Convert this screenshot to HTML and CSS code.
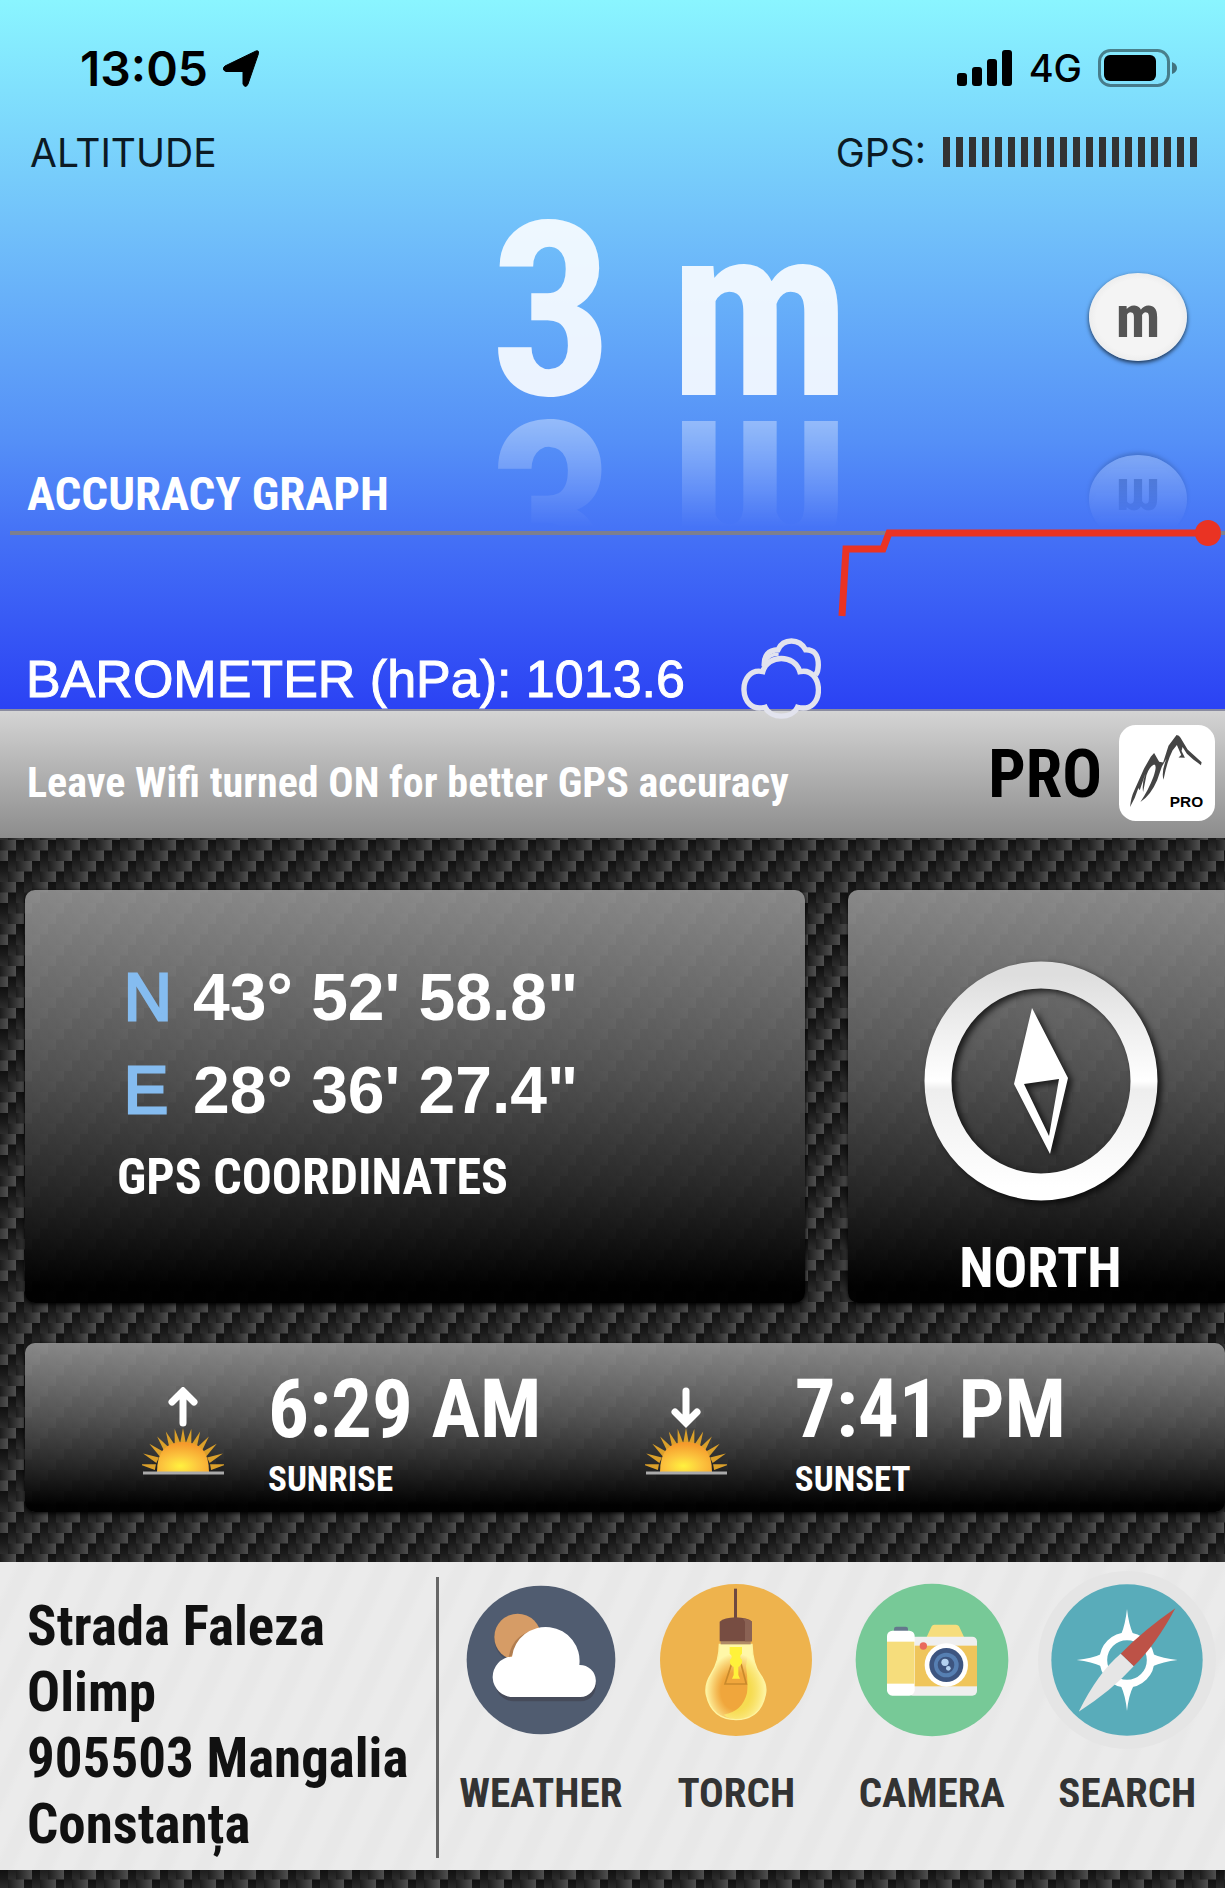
FILE: index.html
```html
<!DOCTYPE html>
<html lang="en">
<head>
<meta charset="utf-8">
<meta name="viewport" content="width=device-width, initial-scale=1">
<title>Altimeter</title>
<link rel="stylesheet" href="styles.css">
</head>
<body>
<header class="sky">
  <div class="status">
    <span class="clock">13:05</span>
    <svg class="arrow" viewBox="0 0 36 37"><path d="M33 1Q36 0 35.500 3.500L25 34Q22.500 39 20 34V21.500H3Q-2 19.500 2 16Z" stroke="#000" stroke-linejoin="round"/></svg>
    <svg class="signal" viewBox="0 0 56 36"><rect y="23" width="10" height="13" rx="3"/><rect x="15" y="17" width="10" height="19" rx="3"/><rect x="30" y="9" width="10" height="27" rx="3"/><rect x="45" width="10" height="36" rx="3"/></svg>
    <span class="network">4G</span>
    <svg class="battery" viewBox="0 0 80 38"><rect x="1.500" y="1.500" width="69" height="35" rx="11" fill="none" stroke="#000" stroke-opacity=".45" stroke-width="3"/><rect x="6" y="6" width="52" height="26" rx="6"/><path d="M74 13q5 2 5 6t-5 6z" fill-opacity=".5"/></svg>
  </div>
  <div class="meta">
    <span>ALTITUDE</span>
    <span class="gps">GPS:</span>
    <span class="bars" role="img" aria-label="GPS signal: full"></span>
  </div>
  <div class="readout">
    <output class="altitude">3 m</output>
    <button class="unit" type="button">m</button>
  </div>
  <h2 class="graph-title">ACCURACY GRAPH</h2>
  <svg class="graph" viewBox="0 0 1225 120" role="img" aria-label="Accuracy graph">
    <path d="M10 15H1225" stroke="#7c7f90" stroke-width="4"/>
    <path d="M842 98L846 31H883L889 15H1208" fill="none" stroke="#ea3323" stroke-width="7"/>
    <circle cx="1208" cy="15" r="13" fill="#ea3323"/>
  </svg>
  <div class="baro">
    <span>BAROMETER (hPa): 1013.6</span>
    <svg class="cloud" viewBox="124 416 238 240" fill="none" stroke="#e2e3ee" stroke-width="16">
      <path d="M193 500Q191 452 234 451Q246 425 274 425Q302 425 316 451Q354 450 354 496Q354 515 346 526"/>
      <path d="M197 489Q205 464 236 464" stroke-width="10"/>
      <path d="M189 516C204 464 284 464 299 516C372 500 376 644 292 622C276 657 212 657 196 622C114 644 112 500 189 516Z"/>
    </svg>
  </div>
</header>
<section class="notice">
  <p class="tip">Leave Wifi turned ON for better GPS accuracy</p>
  <a class="pro" href="#pro">PRO</a>
  <svg class="app" viewBox="0 0 287 287" role="img" aria-label="Altimeter PRO">
    <rect width="287" height="287" rx="50" fill="#fff"/>
    <path fill="#444" d="M172 30Q180 30 184 38L205 73L247 111L245 120L222 103L203 86L190 66L187 78L197 98L178 97L186 90L173 60L160 76Q143 110 133 164Q126 140 142 100L128 125L114 165Q95 210 64 230Q88 195 103 155Q115 120 105 118Q90 125 82 150L72 200Q68 175 79 145L62 195L58 188Q48 220 33 245Q36 215 46 195L75 130L95 95L105 84L120 110L132 112L148 62Z"/>
    <text x="152" y="245">PRO</text>
  </svg>
</section>
<main class="panels">
  <div class="cards">
    <section class="card coords">
      <dl>
        <dt>N</dt><dd>43° 52' 58.8"</dd>
        <dt>E</dt><dd>28° 36' 27.4"</dd>
      </dl>
      <h2>GPS COORDINATES</h2>
    </section>
    <section class="card compass">
      <svg viewBox="0 0 250 250" role="img" aria-label="Compass">
        <defs>
          <linearGradient id="ring" x1="0" y1="0" x2="0" y2="1"><stop offset="0" stop-color="#dedede"/><stop offset=".5" stop-color="#fff"/><stop offset=".54" stop-color="#eee"/><stop offset="1" stop-color="#fff"/></linearGradient>
        </defs>
        <ellipse cx="125" cy="125" rx="103" ry="106" fill="none" stroke="url(#ring)" stroke-width="27"/>
        <path fill-rule="evenodd" d="M116 52L98 128L134 198L152 122ZM108 128L143 123L133 180Z" fill="#fff"/>
      </svg>
      <h2>NORTH</h2>
    </section>
  </div>
  <section class="card sun">
    <svg viewBox="0 0 82 88" role="img" aria-label="Sunrise">
      <defs>
        <radialGradient id="disc" cx=".45" cy=".8" r=".75"><stop offset="0" stop-color="#fff23f"/><stop offset=".45" stop-color="#fcc63e"/><stop offset="1" stop-color="#f59a2c"/></radialGradient>
        <g id="ray"><path d="M38 57L41 41L44 57Z"/></g>
        <g id="dawn">
          <g fill="#dba02a">
            <use href="#ray" transform="rotate(-80 41 85)"/><use href="#ray" transform="rotate(-65 41 85)"/><use href="#ray" transform="rotate(-50 41 85)"/><use href="#ray" transform="rotate(-36 41 85)"/><use href="#ray" transform="rotate(-23 41 85)"/><use href="#ray" transform="rotate(-11 41 85)"/><use href="#ray"/><use href="#ray" transform="rotate(11 41 85)"/><use href="#ray" transform="rotate(23 41 85)"/><use href="#ray" transform="rotate(36 41 85)"/><use href="#ray" transform="rotate(50 41 85)"/><use href="#ray" transform="rotate(65 41 85)"/><use href="#ray" transform="rotate(80 41 85)"/>
          </g>
          <path d="M15 85Q15 55 41 55T67 85Z" fill="url(#disc)"/>
          <path d="M1 86H82" stroke="#aaa" stroke-width="3"/>
        </g>
      </defs>
      <path d="M41 36V6M30 15L41 4L52 15" fill="none" stroke="#fff" stroke-width="7" stroke-linecap="round"/>
      <use href="#dawn"/>
    </svg>
    <div class="time"><time>6:29 AM</time><h3>SUNRISE</h3></div>
    <svg viewBox="0 0 82 88" role="img" aria-label="Sunset">
      <path d="M41 4V34M30 25L41 36L52 25" fill="none" stroke="#fff" stroke-width="7" stroke-linecap="round"/>
      <use href="#dawn"/>
    </svg>
    <div class="time"><time>7:41 PM</time><h3>SUNSET</h3></div>
  </section>
</main>
<footer class="dock">
  <address>Strada Faleza<br>Olimp<br>905503 Mangalia<br>Constanța</address>
  <nav class="tools">
    <a href="#weather">
      <svg viewBox="38 33 534 534">
        <circle cx="305" cy="300" r="223" fill="#505c70"/>
        <circle cx="235" cy="238" r="70" fill="#484f60"/>
        <circle cx="235" cy="231" r="70" fill="#d69c66"/>
        <path d="M208 291Q222 213 303 210L285 258Z" fill="#b27e50"/>
        <path d="M223 424a58 58 0 0 1-56-58h304q0 56-48 58z" fill="#464b5a"/>
        <path d="M223 411a60 60 0 0 1-5-121a101 101 0 0 1 202 25a48 48 0 0 1 3 96z" fill="#fff"/>
      </svg>
      <span>WEATHER</span>
    </a>
    <a href="#torch">
      <svg viewBox="618 34 534 534">
        <defs>
          <radialGradient id="glass" cx=".5" cy=".62" r=".5"><stop offset=".5" stop-color="#ffe98a" stop-opacity="0"/><stop offset="1" stop-color="#fff7a8"/></radialGradient>
        </defs>
        <circle cx="885" cy="301" r="228" fill="#eeb34d"/>
        <path d="M835 254H933Q935 315 958 345Q980 375 973 405Q958 479 885 480Q812 479 796 405Q790 375 811 342Q835 305 835 254Z" fill="#f0a63c"/>
        <path d="M925 254H933Q935 315 958 345Q980 375 973 405Q958 479 885 480Q865 479 848 465Q905 455 918 400Q922 365 915 320Z" fill="#f6dc52"/>
        <path d="M835 254H933Q935 315 958 345Q980 375 973 405Q958 479 885 480Q812 479 796 405Q790 375 811 342Q835 305 835 254Z" fill="url(#glass)" stroke="#fdf3a0" stroke-width="4"/>
        <path d="M872 312L852 373H916L900 312" fill="none" stroke="#c98a2c" stroke-width="5"/>
        <path d="M866 262H903V282Q892 290 903 300Q905 315 892 322V346L897 357H873L878 346V322Q864 315 867 300Q878 290 866 282Z" fill="#fff23a"/>
        <path d="M879 87H888V176H879Z" fill="#6f4940"/>
        <rect x="839" y="244" width="90" height="10" fill="#b08b66"/>
        <path d="M836 245V186Q850 174 884 173Q920 174 933 186V245Z" fill="#774d42"/>
        <path d="M912 245V186L905 176Q925 180 933 186V245Z" fill="#8a6254"/>
      </svg>
      <span>TORCH</span>
    </a>
    <a href="#camera">
      <svg viewBox="45 28 534 534">
        <circle cx="312" cy="295" r="229" fill="#77c997"/>
        <rect x="198" y="195" width="42" height="20" rx="7" fill="#64788c"/>
        <path d="M296 226L311 194Q313 189 319 189H384Q390 189 393 194L408 226Z" fill="#f6dd7c"/>
        <rect x="240" y="225" width="207" height="177" rx="14" fill="#efefef"/>
        <rect x="258" y="252" width="189" height="122" fill="#efc55b"/>
        <rect x="177" y="207" width="83" height="195" rx="16" fill="#fff"/>
        <rect x="177" y="240" width="82" height="126" fill="#f6dd7c"/>
        <circle cx="286" cy="253" r="11" fill="#e96a5d"/>
        <circle cx="355" cy="310" r="65" fill="#fff"/>
        <circle cx="355" cy="310" r="51" fill="#3d5580"/>
        <circle cx="355" cy="310" r="37" fill="#567fb2"/>
        <circle cx="354" cy="310" r="25" fill="#3d5580"/>
        <circle cx="351" cy="302" r="11" fill="#b4d2f0"/>
        <circle cx="361" cy="320" r="7" fill="#b4d2f0"/>
      </svg>
      <span>CAMERA</span>
    </a>
    <a href="#search">
      <svg viewBox="631 39 534 534">
        <circle cx="898" cy="306" r="267" fill="#e5e5e5"/>
        <circle cx="898" cy="306" r="227" fill="#59acba"/>
        <circle cx="898" cy="306" r="71" fill="none" stroke="#fff" stroke-width="23"/>
        <path fill="#fff" d="M898 153Q903 200 917 230H880Q893 200 898 153ZM1050 306Q1005 311 975 325V288Q1005 302 1050 306ZM898 459Q893 412 880 385H917Q903 412 898 459ZM747 306Q793 302 821 288V325Q793 311 747 306Z"/>
        <path d="M1043 151Q985 260 918 325L879 287Q950 215 1043 151Z" fill="#bd5247"/>
        <path d="M753 461Q810 345 879 287L918 325Q850 400 753 461Z" fill="#e6e6e6"/>
      </svg>
      <span>SEARCH</span>
    </a>
  </nav>
</footer>
</body>
</html>
```
FILE: styles.css
```css
* { box-sizing: border-box; }

:root {
  --condensed: "Roboto Condensed", "Liberation Sans Narrow", "Liberation Sans", sans-serif;
}

body {
  margin: 0;
  min-height: 100vh;
  font-family: var(--condensed);
  font-weight: 700;
  color: #fff;
  background: #1c1c1c url("data:image/svg+xml,%3Csvg xmlns='http://www.w3.org/2000/svg' width='32' height='42'%3E%3Cdefs%3E%3ClinearGradient id='a'%3E%3Cstop stop-color='%231c1c1c'/%3E%3Cstop offset='1' stop-color='%23505050'/%3E%3C/linearGradient%3E%3ClinearGradient id='b' x2='0' y2='1'%3E%3Cstop stop-color='%23101010'/%3E%3Cstop offset='1' stop-color='%231c1c1c'/%3E%3C/linearGradient%3E%3ClinearGradient id='c' x2='0' y2='1'%3E%3Cstop stop-color='%231c1c1c'/%3E%3Cstop offset='1' stop-color='%232e2e2e'/%3E%3C/linearGradient%3E%3Cg id='r'%3E%3Crect width='16' height='11' fill='url(%23a)'/%3E%3Crect x='16' width='8' height='11' fill='url(%23b)'/%3E%3Crect x='24' width='8' height='11' fill='url(%23c)'/%3E%3C/g%3E%3C/defs%3E%3Cuse href='%23r'/%3E%3Cuse href='%23r' x='-8' y='10.5'/%3E%3Cuse href='%23r' x='24' y='10.5'/%3E%3Cuse href='%23r' x='-16' y='21'/%3E%3Cuse href='%23r' x='16' y='21'/%3E%3Cuse href='%23r' x='-24' y='31.5'/%3E%3Cuse href='%23r' x='8' y='31.5'/%3E%3C/svg%3E");
}

h2, h3, p, dl, dd { margin: 0; }
h2, h3 { font-weight: 700; }
a { color: inherit; text-decoration: none; }
svg { display: block; flex: none; }

/* Sky header */
.sky {
  background: linear-gradient(#8af5ff, #72c2fa 31%, #5590f7 62%, #4470f6 76%, #2b42f4);
}

.status {
  display: flex;
  align-items: center;
  height: 96px;
  padding: 40px 47px 0 80px;
  color: #000;
  font-family: Inter, "Liberation Sans", sans-serif;
}
.clock { font-size: 48px; font-weight: 600; }
.arrow { width: 36px; margin-left: 15px; }
.signal { width: 56px; margin-left: auto; }
.network { margin: 0 16px; font-size: 38px; font-weight: 500; }
.battery { width: 80px; }

.meta {
  display: flex;
  align-items: center;
  height: 112px;
  padding: 0 22px 0 30px;
  color: #0c1a24;
  font: 400 39px Inter, "Liberation Sans", sans-serif;
}
.gps { margin-left: auto; }
.bars {
  width: 260px;
  height: 30px;
  margin-left: 17px;
  background: repeating-linear-gradient(90deg, #333 0 7px, transparent 7px 13px);
}

.readout {
  display: flex;
  align-items: center;
  justify-content: space-between;
  height: 200px;
  padding: 18px 38px 0 40%;
  -webkit-box-reflect: below 0 linear-gradient(transparent 40%, rgba(0, 0, 0, .46));
}
.altitude {
  padding-bottom: 10px;
  font-size: 244px;
  line-height: 180px;
  color: rgba(255, 255, 255, .88);
}
.unit {
  width: 98px;
  height: 88px;
  padding: 0;
  border: 0;
  border-radius: 50%;
  font: 700 60px/80px var(--condensed);
  color: #555;
  background: radial-gradient(#f4f4f4 60%, #e4e4e4 85%, #c8c8c8);
  box-shadow: 0 2px 4px rgba(0, 0, 0, .7);
}

.graph-title {
  margin-top: 61px;
  padding-left: 27px;
  font-size: 47px;
  line-height: 49px;
}
.graph { width: 100%; }

.baro {
  display: flex;
  align-items: flex-start;
  height: 71px;
  padding-left: 26px;
  font: 400 52px/82px "Liberation Sans", Arial, sans-serif;
  -webkit-text-stroke: 1px #fff;
}
.cloud { position: relative; width: 80px; margin-left: 56px; }

/* Notice bar */
.notice {
  display: flex;
  align-items: baseline;
  height: 129px;
  padding: 14px 10px 0 27px;
  border-top: 2px solid #8a8ca0;
  background: linear-gradient(#d4d4d4, #b0b0b0 50%, #8c8c8c);
}
.tip { font-size: 42px; }
.pro { margin-left: auto; color: #000; font-size: 66px; line-height: 100px; }
.app { width: 96px; margin-left: 17px; align-self: flex-start; }
.app text { font: 700 46px "Liberation Sans", Arial, sans-serif; }

/* Carbon panels */
.panels { padding: 52px 0 50px 25px; }
.cards {
  display: grid;
  grid-template-columns: 780fr 377fr;
  gap: 43px;
  margin-bottom: 40px;
}
.card {
  border-radius: 10px;
  background: linear-gradient(rgba(145, 145, 145, .92), rgba(85, 85, 85, .9) 45%, rgba(40, 40, 40, .92) 72%, rgba(0, 0, 0, .97) 96%);
  box-shadow: 0 1px 4px #000;
}
.coords { padding: 61px 92px 86px; }
.coords dl {
  display: grid;
  grid-template-columns: 69px 1fr;
  padding-left: 7px;
  font: 700 66px/93px "Liberation Sans", Arial, sans-serif;
}
.coords dt { color: #85bcf0; font-weight: 400; -webkit-text-stroke: 3px #85bcf0; }
.coords h2 { font-size: 50px; line-height: 80px; }

.compass {
  display: flex;
  flex-direction: column;
  align-items: center;
  padding: 66px 0 0 8px;
  border-radius: 10px 0 0 10px;
}
.compass svg { width: 250px; filter: drop-shadow(4px 3px 3px rgba(0, 0, 0, .7)); }
.compass h2 { margin-top: 28px; font-size: 56px; line-height: 69px; }

.sun {
  display: grid;
  grid-template-columns: 82px 332fr 82px 453fr;
  column-gap: 44px;
  align-items: start;
  height: 169px;
  padding: 25px 0 0 117px;
}
.sun svg { margin-top: 19px; }
.time time { display: block; font-size: 81px; line-height: 84px; }
.time h3 { font-size: 35px; line-height: 56px; }
.time:last-child { padding-left: 24px; }

/* Address and tools */
.dock {
  display: grid;
  grid-template-columns: 439fr 786fr;
  height: 308px;
  color: #111;
  background: repeating-linear-gradient(115deg, #ebebeb 0 14px, #e8e8e8 20px 30px, #ebebeb 36px);
}
.dock address {
  min-width: 0;
  margin: 15px 0 12px;
  padding: 16px 0 0 27px;
  border-right: 3px solid #666;
  font-style: normal;
  font-size: 55px;
  line-height: 66px;
  white-space: nowrap;
}
.tools {
  display: grid;
  grid-template-columns: repeat(4, 1fr);
  padding: 9px 0 0 4px;
}
.tools a {
  display: flex;
  flex-direction: column;
  align-items: center;
  gap: 20px;
  color: #333;
  font-size: 41px;
  line-height: 48px;
}
.tools svg { width: 178px; }
```
